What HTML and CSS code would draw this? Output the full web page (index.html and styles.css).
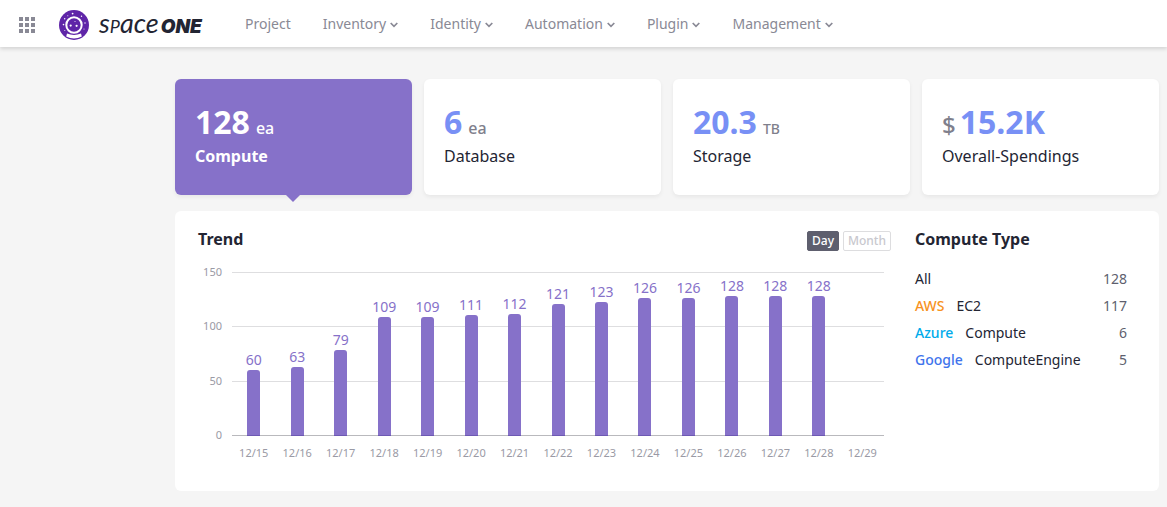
FILE: index.html
```html
<!DOCTYPE html>
<html lang="en">
<head>
<meta charset="utf-8">
<title>SpaceONE</title>
<link rel="stylesheet" href="styles.css">
</head>
<body>
<header class="topbar">
  <button class="apps" type="button" aria-label="All services">
    <svg width="16" height="16" viewBox="0 0 16 16" fill="#898995"><path d="M0 0h4v4H0zM6 0h4v4H6zM12 0h4v4h-4zM0 6h4v4H0zM6 6h4v4H6zM12 6h4v4h-4zM0 12h4v4H0zM6 12h4v4H6zM12 12h4v4h-4z"/></svg>
  </button>
  <a class="brand" href="#">
    <svg class="emblem" width="30" height="30" viewBox="0 0 30 30" aria-hidden="true">
      <circle cx="15" cy="15" r="15" fill="#5f25a8"/>
      <circle cx="15" cy="15" r="7.7" fill="none" stroke="#fff" stroke-width="2"/>
      <path d="M8 23.600q7 2.800 14 0l.8 3q-7.800 4-15.600 0z" fill="#fff"/>
      <g fill="#fff"><circle cx="11.700" cy="15.600" r="1.100"/><circle cx="17.600" cy="15.800" r="1.100"/><circle cx="16" cy="11.600" r=".5"/><circle cx="13.600" cy="3.600" r=".9"/><circle cx="5.700" cy="8.800" r=".7"/><circle cx="22.500" cy="6.200" r=".7"/><circle cx="4.500" cy="14.600" r=".8"/><circle cx="26" cy="13" r=".7"/><circle cx="8.800" cy="5.700" r=".5"/><circle cx="25" cy="19" r=".5"/><circle cx="5.800" cy="20.600" r=".5"/></g>
    </svg>
    <span class="wordmark">s<span class="cap">p</span>ace<b class="one">ONE</b></span>
  </a>
  <nav class="menu">
    <a href="#">Project</a>
    <a href="#">Inventory<svg class="chev" width="8" height="6" viewBox="0 0 8 6"><path d="M.7 1 4 4.300 7.300 1"/></svg></a>
    <a href="#">Identity<svg class="chev" width="8" height="6" viewBox="0 0 8 6"><path d="M.7 1 4 4.300 7.300 1"/></svg></a>
    <a href="#">Automation<svg class="chev" width="8" height="6" viewBox="0 0 8 6"><path d="M.7 1 4 4.300 7.300 1"/></svg></a>
    <a href="#">Plugin<svg class="chev" width="8" height="6" viewBox="0 0 8 6"><path d="M.7 1 4 4.300 7.300 1"/></svg></a>
    <a href="#">Management<svg class="chev" width="8" height="6" viewBox="0 0 8 6"><path d="M.7 1 4 4.300 7.300 1"/></svg></a>
  </nav>
</header>
<main class="page">
  <section class="cards">
    <button type="button" class="card active"><span class="figure"><b class="count">128</b><span class="unit">ea</span></span><span class="label">Compute</span></button>
    <button type="button" class="card"><span class="figure"><b class="count">6</b><span class="unit">ea</span></span><span class="label">Database</span></button>
    <button type="button" class="card"><span class="figure"><b class="count">20.3</b><span class="unit small">TB</span></span><span class="label">Storage</span></button>
    <button type="button" class="card"><span class="figure money"><span class="currency">$</span><b class="count">15.2K</b></span><span class="label">Overall-Spendings</span></button>
  </section>
  <section class="panel">
    <div class="trend">
      <div class="trend-head">
        <h2>Trend</h2>
        <div class="period">
          <button type="button" class="on">Day</button>
          <button type="button">Month</button>
        </div>
      </div>
      <div class="chart">
        <div class="y-axis"><span>150</span><span>100</span><span>50</span><span>0</span></div>
        <div class="plot">
          <div class="gridlines"><i></i><i></i><i></i><i></i></div>
          <div class="bars">
            <div class="col"><span>60</span><div class="bar" style="height:40%"></div></div>
            <div class="col"><span>63</span><div class="bar" style="height:42%"></div></div>
            <div class="col"><span>79</span><div class="bar" style="height:52.67%"></div></div>
            <div class="col"><span>109</span><div class="bar" style="height:72.67%"></div></div>
            <div class="col"><span>109</span><div class="bar" style="height:72.67%"></div></div>
            <div class="col"><span>111</span><div class="bar" style="height:74%"></div></div>
            <div class="col"><span>112</span><div class="bar" style="height:74.67%"></div></div>
            <div class="col"><span>121</span><div class="bar" style="height:80.67%"></div></div>
            <div class="col"><span>123</span><div class="bar" style="height:82%"></div></div>
            <div class="col"><span>126</span><div class="bar" style="height:84%"></div></div>
            <div class="col"><span>126</span><div class="bar" style="height:84%"></div></div>
            <div class="col"><span>128</span><div class="bar" style="height:85.33%"></div></div>
            <div class="col"><span>128</span><div class="bar" style="height:85.33%"></div></div>
            <div class="col"><span>128</span><div class="bar" style="height:85.33%"></div></div>
            <div class="col"></div>
          </div>
        </div>
        <div class="x-axis"><span>12/15</span><span>12/16</span><span>12/17</span><span>12/18</span><span>12/19</span><span>12/20</span><span>12/21</span><span>12/22</span><span>12/23</span><span>12/24</span><span>12/25</span><span>12/26</span><span>12/27</span><span>12/28</span><span>12/29</span></div>
      </div>
    </div>
    <div class="types">
      <h2>Compute Type</h2>
      <table>
        <tr><th scope="row">All</th><td>128</td></tr>
        <tr><th scope="row"><span class="vendor aws">AWS</span>EC2</th><td>117</td></tr>
        <tr><th scope="row"><span class="vendor azure">Azure</span>Compute</th><td>6</td></tr>
        <tr><th scope="row"><span class="vendor google">Google</span>ComputeEngine</th><td>5</td></tr>
      </table>
    </div>
  </section>
</main>
</body>
</html>
```
FILE: styles.css
```css
* { box-sizing: border-box; }
body { margin: 0; background: #f5f5f5; color: #232533; font-family: "Noto Sans", sans-serif; font-size: 14px; }
button { font: inherit; color: inherit; border: 0; padding: 0; background: none; cursor: pointer; }
a { color: inherit; text-decoration: none; }
h2 { margin: 0; font-size: 16px; line-height: 24px; font-weight: 700; }

.topbar { position: relative; display: flex; align-items: center; height: 47px; padding: 2px 19px 0; background: #fff; box-shadow: 0 2px 4px rgba(0, 0, 0, .14); }
.apps { display: flex; margin-right: 24px; }
.brand { display: flex; align-items: center; gap: 10px; width: 186px; color: #232533; }
.emblem { flex: none; }
.wordmark { display: flex; align-items: baseline; font: italic 27px/30px Lato, sans-serif; }
.cap { font-size: 18px; text-transform: uppercase; }
.one { margin-left: 2px; font-family: Inter, sans-serif; font-size: 19px; font-weight: 900; }
.menu { display: flex; gap: 32px; padding-bottom: 2px; color: #898995; line-height: 20px; }
.menu a { display: flex; align-items: center; gap: 4px; }
.chev { margin-top: 2px; fill: none; stroke: #898995; stroke-width: 1.700; }

.page { padding: 32px 8px 16px 175px; }
.cards { display: grid; grid-template-columns: repeat(4, 1fr); gap: 12px; }
.card { position: relative; display: flex; flex-direction: column; align-items: flex-start; padding: 21px 20px 27px; border-radius: 6px; background: #fff; box-shadow: 0 2px 4px rgba(0, 0, 0, .06); text-align: left; }
.figure { display: flex; align-items: baseline; gap: 6px; height: 44px; line-height: 44px; }
.count { font-size: 32px; color: #7890f5; }
.unit { font-size: 16px; font-weight: 500; color: #7f7f8c; }
.unit.small { font-size: 14px; }
.money { gap: 4px; }
.currency { font-size: 24px; font-weight: 500; color: #7f7f8c; }
.label { font-size: 16px; line-height: 24px; }
.active { background: #8671c9; }
.active, .active .count, .active .unit { color: #fff; }
.active .label { font-weight: 700; }
.active::after { content: ""; position: absolute; top: 100%; left: calc(50% - 8px); border: 7px solid transparent; border-top-color: #8671c9; border-bottom: 0; }

.panel { display: grid; grid-template-columns: 1fr 212px; gap: 24px; margin-top: 16px; padding: 16px 32px 30px 23px; border-radius: 6px; background: #fff; }
.trend-head { display: flex; justify-content: space-between; }
.period { display: flex; gap: 4px; padding-top: 4px; }
.period button { height: 20px; padding: 0 4px; border: 1px solid #dddddf; border-radius: 2px; font-size: 12px; line-height: 18px; font-weight: 500; color: #c8c8ce; }
.period .on { border-color: #5e5f6e; background: #5e5f6e; color: #fff; }

.chart { display: grid; grid-template-columns: 24px 1fr; column-gap: 10px; padding: 21px 7px 0 0; }
.y-axis, .x-axis { font-size: 11px; line-height: 16px; color: #9a9aa5; }
.y-axis { display: flex; flex-direction: column; justify-content: space-between; margin: -8px 0 -7px; text-align: right; }
.plot { position: relative; height: 164px; }
.gridlines { position: absolute; inset: 0; display: flex; flex-direction: column; justify-content: space-between; }
.gridlines i { height: 1px; background: #dedee0; }
.gridlines i:last-child { background: #b9b9bd; }
.bars { position: relative; display: flex; height: 100%; }
.col { flex: 1 1 0; display: flex; flex-direction: column; justify-content: flex-end; align-items: center; font-size: 14px; line-height: 20px; color: #8671c9; }
.bar { flex: none; width: 13px; border-radius: 3px 3px 0 0; background: #8671c9; border-bottom: 1px solid #6d59b3; }
.x-axis { grid-column: 2; display: flex; padding-top: 9px; }
.x-axis span { flex: 1 1 0; text-align: center; }

.types table { width: 100%; margin-top: 14px; border-collapse: collapse; line-height: 27px; }
.types th, .types td { padding: 0; font-weight: 400; text-align: left; white-space: nowrap; }
.types td { text-align: right; color: #5e5f6e; }
.vendor { margin-right: 12px; font-weight: 500; }
.aws { color: #f7921e; }
.azure { color: #00abeb; }
.google { color: #4074ec; }
```
